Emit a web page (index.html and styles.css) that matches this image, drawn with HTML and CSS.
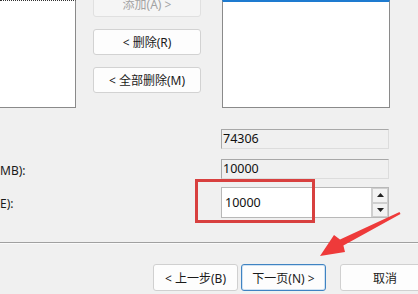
FILE: index.html
```html
<!DOCTYPE html>
<html>
<head>
<meta charset="utf-8">
<link rel="stylesheet" href="styles.css">
</head>
<body>
<div class="dialog">
  <div class="top">
    <div class="lbox left-box"></div>
    <div class="btncol">
      <div class="btn disabled first">添加(A) &gt;</div>
      <div class="btn">&lt; 删除(R)</div>
      <div class="btn">&lt; 全部删除(M)</div>
    </div>
    <div class="lbox right-box"></div>
  </div>
  <div class="fields">
    <div class="row r1"><span class="lbl"></span><div class="field ro">74306</div></div>
    <div class="row r2"><span class="lbl">MB):</span><div class="field ro">10000</div></div>
    <div class="row r3"><span class="lbl">E):</span>
      <div class="spin">
        <div class="spin-text">10000</div>
        <div class="spin-btns">
          <div class="sb"><svg width="7" height="4" viewBox="0 0 7 4"><path d="M0 4 L3.5 0 L7 4Z" fill="#222"/></svg></div>
          <div class="sb"><svg width="7" height="4" viewBox="0 0 7 4"><path d="M0 0 L3.5 4 L7 0Z" fill="#222"/></svg></div>
        </div>
      </div>
    </div>
  </div>
  <div class="sep"></div>
  <div class="bottom">
    <div class="bbtn">&lt; 上一步(B)</div>
    <div class="bbtn primary">下一页(N) &gt;</div>
    <div class="bbtn cancel">取消</div>
  </div>
  <div class="redbox"></div>
  <svg class="arrow" width="100" height="60" viewBox="0 0 100 60">
    <path d="M0 55 L14 34 L20 38.6 L79.5 11.1 L80.5 12.9 L23.4 44.5 L25 51 Z" fill="#ee3a3a"/>
  </svg>
</div>
</body>
</html>
```
FILE: styles.css
```css
html, body {
  margin: 0;
  padding: 0;
  background: #f0f0f0;
}
body {
  width: 418px;
  height: 294px;
  overflow: hidden;
  font-family: "Noto Sans", "Noto Sans CJK SC", sans-serif;
  font-size: 12px;
  color: #1a1a1a;
}
.dialog {
  position: relative;
  width: 418px;
  height: 294px;
}
.top {
  display: flex;
  height: 108px;
}
.lbox {
  background: #fff;
  box-sizing: border-box;
  height: 108px;
  border: 1px solid #8a8a8a;
  border-top: none;
}
.left-box {
  width: 76px;
  border-left: none;
  border-top: 1px dotted #333;
}
.right-box {
  margin-left: 21px;
  width: 168px;
  border-top: 2px solid #1e7bd0;
}
.btncol {
  margin-left: 17px;
  width: 108px;
  display: flex;
  flex-direction: column;
  gap: 12px;
}
.btn {
  box-sizing: border-box;
  height: 26px;
  border: 1px solid #d2d2d2;
  border-radius: 3px;
  background: #fdfdfd;
  display: flex;
  align-items: center;
  justify-content: center;
  font-size: 12px;
  color: #1a1a1a;
}
.btn.first {
  margin-top: -9px;
}
.btn.disabled {
  color: #a3a3a3;
  background: #f5f5f5;
  border-color: #e0e0e0;
}
.fields {
  display: flex;
  flex-direction: column;
  padding-top: 21px;
}
.row {
  display: flex;
  align-items: center;
  justify-content: space-between;
  width: 389px;
}
.r2 { margin-top: 10px; }
.r3 { margin-top: 8px; }
.lbl {
  font-size: 12px;
  padding-top: 2px;
}
.field {
  box-sizing: border-box;
  width: 168px;
  height: 20px;
  border: 1px solid #a8a8a8;
  border-bottom-color: #dcdcdc;
  border-right-color: #dcdcdc;
  font-size: 12.5px;
  line-height: 18px;
  padding-left: 1px;
  color: #111;
}
.spin {
  box-sizing: border-box;
  width: 168px;
  height: 31px;
  border: 1px solid #b8b8b8;
  background: #fff;
  display: flex;
}
.spin-text {
  flex: 1;
  font-size: 12.5px;
  line-height: 29px;
  padding-left: 3px;
  color: #111;
}
.spin-btns {
  width: 16px;
  display: flex;
  flex-direction: column;
  border-left: 1px solid #d0d0d0;
}
.sb {
  flex: 1;
  display: flex;
  align-items: center;
  justify-content: center;
  background: #f3f3f3;
  border: 1px solid #cfcfcf;
}
.sep {
  margin-top: 24px;
  height: 1px;
  background: #a0a0a0;
  border-bottom: 1px solid #fafafa;
}
.bottom {
  display: flex;
  padding-top: 20px;
  padding-left: 153px;
}
.bbtn {
  box-sizing: border-box;
  flex-shrink: 0;
  height: 27px;
  width: 85px;
  border: 1px solid #d0d0d0;
  border-radius: 3px;
  background: #fdfdfd;
  display: flex;
  align-items: center;
  justify-content: center;
  font-size: 12px;
}
.bbtn.primary {
  margin-left: 3px;
  border-color: #3f83c2;
  box-shadow: inset 0 0 0 1px #cfe2f3;
}
.bbtn.cancel {
  margin-left: 14px;
  width: 90px;
}
.redbox {
  position: absolute;
  left: 195px;
  top: 179px;
  width: 120px;
  height: 44px;
  box-sizing: border-box;
  border: 3px solid #d8403f;
}
.arrow {
  position: absolute;
  left: 320px;
  top: 201px;
}
```
